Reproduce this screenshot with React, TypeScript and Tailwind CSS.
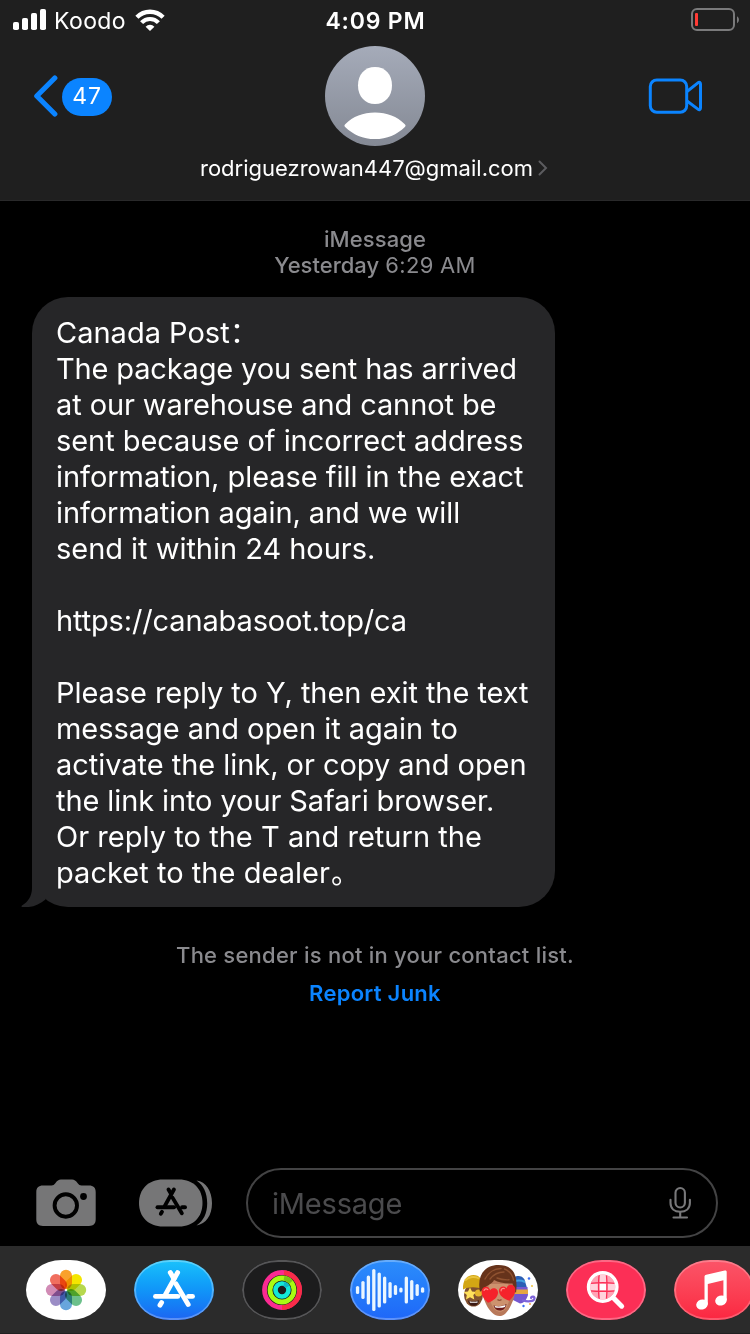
import type { ReactNode } from "react";

function SignalBars() {
  return (
    <svg width="34" height="22" viewBox="0 0 34 22" fill="#fff">
      <rect x="0" y="13" width="6" height="8" rx="1.8" />
      <rect x="9" y="9" width="6" height="12" rx="1.8" />
      <rect x="18" y="4" width="6" height="17" rx="1.8" />
      <rect x="27" y="0" width="6" height="21" rx="1.8" />
    </svg>
  );
}

function Wifi() {
  return (
    <svg width="30" height="22" viewBox="0 0 30 22" fill="none">
      <path d="M1.9 8.2a18.6 18.6 0 0 1 26.2 0" stroke="#fff" strokeWidth="4.4" />
      <path d="M6.600 13.600a11.600 11.600 0 0 1 16.800 0" stroke="#fff" strokeWidth="4.200" />
      <path d="M10.600 17.700a6.200 6.200 0 0 1 8.800 0L15 22z" fill="#fff" />
    </svg>
  );
}

function Battery() {
  return (
    <svg width="50" height="24" viewBox="0 0 50 24">
      <rect x="2" y="1" width="42" height="21" rx="5" fill="none" stroke="#7a7a7b" strokeWidth="2" />
      <rect x="5" y="5" width="3" height="13" rx="1" fill="#ff3b35" />
      <path d="M47 8.2c2.6 1.4 2.6 5.6 0 7z" fill="#7a7a7b" />
    </svg>
  );
}

function BackChevron() {
  return (
    <svg width="26" height="44" viewBox="0 0 26 44" fill="none">
      <path d="M22.800 4L4.800 22l18 18" stroke="#0b84ff" strokeWidth="5.200" strokeLinecap="round" strokeLinejoin="round" />
    </svg>
  );
}

function Avatar() {
  return (
    <svg width="100" height="100" viewBox="0 0 100 100">
      <defs>
        <linearGradient id="avatar" x1="0" y1="0" x2="0" y2="1">
          <stop offset="0" stopColor="#a5abb9" />
          <stop offset="1" stopColor="#848994" />
        </linearGradient>
      </defs>
      <circle cx="50" cy="50" r="50" fill="url(#avatar)" />
      <path d="M50 21c10.4 0 17 7.6 17 18.500S60 58 50 58 33 50.400 33 39.500 39.600 21 50 21z" fill="#fff" />
      <path d="M20.200 78.200C28 70.500 38 66.500 50 66.500s22 4 29.800 11.700c1 1 1 1.800.1 2.700C72 88.500 62 93 50 93s-22-4.500-29.900-12.100c-.9-.9-.9-1.700.1-2.700z" fill="#fff" />
    </svg>
  );
}

function VideoIcon() {
  return (
    <svg width="56" height="38" viewBox="0 0 56 38" fill="none" stroke="#0b84ff" strokeWidth="3" strokeLinejoin="round">
      <rect x="2.300" y="3" width="36.400" height="32.300" rx="6.500" />
      <path d="M38.700 14.700L49.900 5.900c1.400-1.100 2.600-.5 2.600 1.200v23.800c0 1.700-1.200 2.300-2.600 1.200L38.700 23.700" />
    </svg>
  );
}

function CameraIcon() {
  return (
    <svg width="60" height="48" viewBox="0 0 60 48">
      <path d="M7 6.500h8.500c1.800 0 2.600-.8 3.600-2C21.400 1.500 22.500.5 25 .5h11c2.500 0 3.600 1 5.900 4 1 1.200 1.800 2 3.600 2H53c4.500 0 6.700 2.200 6.700 6.700v27c0 4.500-2.200 6.700-6.700 6.700H7C2.500 46.900.3 44.700.3 40.200v-27C.3 8.700 2.500 6.500 7 6.500z" fill="#767677" />
      <circle cx="29.800" cy="26.500" r="11.200" fill="none" stroke="#000" strokeWidth="3.900" />
      <circle cx="47.500" cy="17.500" r="3.400" fill="#000" />
    </svg>
  );
}

function AppStoreGlyph({ color, weight }: { color: string; weight: number }) {
  return (
    <g stroke={color} strokeLinecap="round" fill="none" strokeWidth={weight}>
      <path d="M17.300 3.400l3.600 6.200" />
      <path d="M24.600 3.400L12.400 25.400" />
      <path d="M2.500 27.200h22.300" />
      <path d="M35.500 27.200h4" />
      <path d="M22.900 14.600l12.300 20.600" />
      <path d="M8.600 33.300l-1.600 2.600" />
    </g>
  );
}

function AppDrawerIcon() {
  return (
    <svg width="76" height="48" viewBox="0 0 76 48">
      <path d="M57.500 1.600C67 2.800 73 12.300 73 24.300S67 45.200 57.500 46.500C64.500 42 68.200 34.300 68.200 24.300S64.500 6.200 57.500 1.600z" fill="#767677" />
      <path d="M24 .5h16c14.500 0 23.500 9.500 23.500 23.500S54.500 47.500 40 47.500H24C9.500 47.500 0 38 0 24S9.500.5 24 .5z" fill="#767677" />
      <g transform="translate(16.600 8) scale(.745)">
        <AppStoreGlyph color="#000" weight={5.2} />
      </g>
    </svg>
  );
}

function MicIcon() {
  return (
    <svg width="24" height="34" viewBox="0 0 24 34" fill="none" stroke="#78787a" strokeWidth="2.100" strokeLinecap="round">
      <rect x="7.500" y="2" width="9.400" height="19.500" rx="4.700" />
      <path d="M2.500 13.800v3.300c0 5.500 4 8.700 9.700 8.700s9.700-3.200 9.700-8.700v-3.300" />
      <path d="M12.200 26v5M5.500 31.500h13.500" />
    </svg>
  );
}

const petals = [
  { angle: 0, color: "#f9a12c" },
  { angle: 45, color: "#f4e600" },
  { angle: 90, color: "#b6d84e" },
  { angle: 135, color: "#6cc08b" },
  { angle: 180, color: "#68a5dc" },
  { angle: 225, color: "#9b8dc6" },
  { angle: 270, color: "#d18bb5" },
  { angle: 315, color: "#f06e5e" },
];

function PhotosArt() {
  return (
    <g className="isolate">
      {petals.map((p) => (
        <rect key={p.angle} x="34" y="9.800" width="12" height="19.200" rx="6" fill={p.color} transform={`rotate(${p.angle} 40 30)`} className="mix-blend-multiply" />
      ))}
    </g>
  );
}

function ActivityArt() {
  return (
    <g fill="none">
      <circle cx="40" cy="30" r="17.500" stroke="#fb2a92" strokeWidth="4.800" />
      <path d="M42 12.600A17.500 17.500 0 0 1 40 47.500" stroke="#f92c48" strokeWidth="4.800" />
      <circle cx="40" cy="30" r="12" stroke="#a8fb12" strokeWidth="4.800" />
      <path d="M42 18.200a12 12 0 0 1 7 4" stroke="#77c617" strokeWidth="4.800" />
      <circle cx="40" cy="30" r="6.500" stroke="#13e8d8" strokeWidth="4.600" />
      <path d="M42 23.800a6.500 6.500 0 0 1 3.500 3" stroke="#10b8c8" strokeWidth="4.600" />
    </g>
  );
}

const wave = [8, 18, 29, 42, 35, 27, 16, 10, 5, 27, 20, 12, 5.5];

function AudioArt() {
  return (
    <g fill="#eaf6ff">
      {wave.map((h, i) => (
        <rect key={i} x={5.9 + i * 5.42} y={30 - h / 2} width="3.300" height={h} rx="1.600" />
      ))}
    </g>
  );
}

function Heart({ x, y, rotate }: { x: number; y: number; rotate: number }) {
  return (
    <g transform={`translate(${x} ${y}) rotate(${rotate})`}>
      <path d="M0 9C-5.500 5.500-8.500 2-8.200-2.500-7.800-7-2-8 0-3.800 2-8 7.800-7 8.200-2.500 8.500 2 5.500 5.500 0 9z" fill="#f5232b" />
      <path d="M-6-2.500c.3-1.800 2-2.600 3.600-1.500" stroke="#ff8d86" strokeWidth="1.200" fill="none" strokeLinecap="round" />
    </g>
  );
}

function MemojiArt() {
  return (
    <g>
      <ellipse cx="15.500" cy="35" rx="9.500" ry="11.500" fill="#80502f" />
      <path d="M5 29.500C4.500 20 9 15 15.500 15c6 0 9 4 9.500 14.500-6-3-14-3-20 0z" fill="#d3a614" />
      <path d="M7 20.500c4-4 10-4.500 14-2" stroke="#e8c33c" strokeWidth="2" fill="none" />
      <path d="M12 27.500l2 4 4.500.5-3.200 3 1 4.500-4.300-2.300-4 2.300.8-4.500-3.300-3 4.500-.5z" fill="#ffe05c" />
      <circle cx="20.500" cy="33" r="3.600" fill="#e6b52e" />
      <path d="M10 40.500c4 1.300 8 1.300 11-.2-.6 4-2.500 5.500-5.500 5.500s-5-1.800-5.500-5.300z" fill="#3b1a14" />
      <path d="M11.500 41.300c3 .7 6 .7 8 0v1.500h-7.500z" fill="#fff" />
      <path d="M55 18c4-3 9-2.500 11.500 1.500L69 28H55z" fill="#2b5fb4" />
      <path d="M56 21.500c4-1.500 7-1.300 11 .5" stroke="#43a3df" strokeWidth="2" fill="none" />
      <path d="M55 27h14.500l.5 8c-1.500 5-4 8-8 8.500L55 40z" fill="#7558cf" />
      <path d="M56 29.500h14v4.500H56z" fill="#e5a641" />
      <path d="M65 40.500c5 1.500 11 1 11.500-2 .2-2.200-3-2.500-3.500-.6" stroke="#7d63da" strokeWidth="2.200" fill="none" strokeLinecap="round" />
      <circle cx="71" cy="18.500" r="1.300" fill="#3c6ff0" />
      <circle cx="74" cy="26" r="1.100" fill="#f2c84b" />
      <circle cx="65.500" cy="46" r="1.200" fill="#3c6ff0" />
      <circle cx="72" cy="44" r="1" fill="#f2a24b" />
      <path d="M24.500 27c0-12 6-18 16.500-18s16 6 16 18c0 6-.5 11-3.500 17-3 7-7 12-12 12S31.500 51.500 28 44c-3-6-3.500-11-3.500-17z" fill="#b9795a" />
      <path d="M31 24h19c4 6 2 18-2 24-3 5-9 5-12.500 0C31 41 29 31 31 24z" fill="#cd926e" />
      <path d="M22 32C18.500 15 27 5 40.500 5 54 5 60.500 13 58 33c-2.500-3-2.500-6-3.500-9.500-8 .3-14-1-18.500-3.500C34.500 24 27 26 22 32z" fill="#66331b" />
      <path d="M27 19c3-6 9-10.500 16-10.500M32 19c3.500-4.500 8-7 14-7M46.500 9c5 2 8 6 9 11M39 18c4 1.600 8 2 12 1.800" stroke="#8f5230" strokeWidth="1.400" fill="none" strokeLinecap="round" />
      <path d="M39.500 39.500c1 1 3 1 4 0" stroke="#8f5237" strokeWidth="1.300" fill="none" />
      <path d="M35.500 45.500c4.500 1.200 9 .8 13-1.500-.7 4.500-3.500 6.500-6.500 6.500-3.200 0-5.800-2-6.500-5z" fill="#6a1a1a" />
      <path d="M36.500 46c4 .8 7.500.5 11-1l-.5 1.900c-3 1-6.800 1.100-9.600.5z" fill="#fff" />
      <Heart x={31.5} y={34} rotate={10} />
      <Heart x={49.500} y={32} rotate={-12} />
    </g>
  );
}

function SearchArt() {
  return (
    <g>
      <defs>
        <clipPath id="lens">
          <circle cx="36.700" cy="27" r="12.500" />
        </clipPath>
      </defs>
      <path d="M48 38.500l7.700 7.700" stroke="#fff" strokeWidth="5" strokeLinecap="round" />
      <g clipPath="url(#lens)">
        <path d="M24 14h26v26H24z" fill="#ffa3b5" />
        <path d="M33.800 24h6.200v6h-6.200z" fill="#fff" />
        <path d="M33.800 14h6.200v8.500h-6.200zM33.800 32h6.200v8h-6.200zM24 24h8.300v6H24zM41.500 24H50v6h-8.500z" fill="#ffd3dc" />
        <path d="M24 23.300q12.700-1.200 25.400 0M24 30.800q12.700 1.200 25.400 0M33.100 14.500q-1.200 12.500 0 25M40.400 14.500q1.200 12.500 0 25" stroke="#fc2f56" strokeWidth="1.300" fill="none" />
      </g>
      <circle cx="36.700" cy="27" r="14.200" fill="none" stroke="#fff" strokeWidth="3.400" />
    </g>
  );
}

function MusicArt() {
  return (
    <g fill="#fff">
      <path d="M30.500 16.800c0-1.200.6-1.800 1.700-2l18.500-4.300c1.300-.3 2 .2 2 1.400v28.200h-3.300V20.300L33.800 24v20.500h-3.300z" />
      <ellipse cx="28" cy="44.500" rx="5.900" ry="5" transform="rotate(-18 28 44.500)" />
      <ellipse cx="47" cy="40.500" rx="5.900" ry="5" transform="rotate(-18 47 40.500)" />
    </g>
  );
}

function AppPill({ className, children }: { className: string; children: ReactNode }) {
  return (
    <div className={`h-[60px] w-20 shrink-0 overflow-hidden rounded-[36px/30px] ${className}`}>
      <svg width="80" height="60" viewBox="0 0 80 60">{children}</svg>
    </div>
  );
}

function Outline({ color }: { color: string }) {
  return <path d="M36 1h8c20.500 0 35 12.200 35 29S64.500 59 44 59h-8C15.500 59 1 46.800 1 30S15.500 1 36 1z" fill="none" stroke={color} strokeWidth="2" />;
}

function Header() {
  return (
    <header className="flex h-[201px] shrink-0 flex-col border-b border-[#29292a] bg-[#1f1f1f]">
      <div className="grid h-10 grid-cols-3 items-center pl-[13px] pr-[10px]">
        <div className="flex items-center">
          <SignalBars />
          <span className="ml-[7px] pt-[2px] text-[23px] leading-none tracking-[0.4px]">Koodo</span>
          <span className="ml-[9px]"><Wifi /></span>
        </div>
        <div className="pr-[2px] pt-[2px] text-center text-[23px] font-semibold leading-none tracking-[0.8px]">4:09 PM</div>
        <div className="flex justify-end"><Battery /></div>
      </div>
      <div className="mt-[6px] grid h-[100px] grid-cols-3 items-center pl-[32px] pr-[46px]">
        <div className="flex items-center">
          <BackChevron />
          <span className="ml-1 mt-px flex h-[38px] w-[50px] items-center justify-center rounded-full bg-[#0b84ff] text-[23px] tracking-[0.8px]">47</span>
        </div>
        <div className="flex justify-center pl-[14px]"><Avatar /></div>
        <div className="flex justify-end"><VideoIcon /></div>
      </div>
      <div className="flex h-[44px] items-center justify-center pr-[2px]">
        <span className="text-[22px] leading-none">rodriguezrowan447@gmail.com</span>
        <svg className="ml-[5px]" width="10" height="16" viewBox="0 0 10 16" fill="none">
          <path d="M1.500 1.500L8 8l-6.500 6.500" stroke="#5c5c5f" strokeWidth="2" strokeLinecap="round" />
        </svg>
      </div>
    </header>
  );
}

function Message() {
  return (
    <div className="relative ml-8 mt-[19px] h-[610px] w-[523px] rounded-[36px] bg-[#262628] pl-6 pt-[18px] text-[29px] leading-9">
      <svg className="absolute -left-[11px] bottom-0" width="60" height="40" viewBox="0 0 60 40">
        <path d="M11 0v21c0 8-4 14-10 17.500-1 .7-.7 1.200.5 1.400C10.500 41 18 38 24.500 32.500V0z" fill="#262628" />
      </svg>
      <div className="relative whitespace-pre">
        <p>Canada Post：</p>
        <p className="tracking-[-0.15px]">The package you sent has arrived</p>
        <p className="tracking-[-0.1px]">at our warehouse and cannot be</p>
        <p className="tracking-[-0.06px]">sent because of incorrect address</p>
        <p className="tracking-[-0.044px]">information, please fill in the exact</p>
        <p className="tracking-[-0.1px]">information again, and we will</p>
        <p className="tracking-[-0.029px]">send it within 24 hours.</p>
        <p className="mt-9 tracking-[-0.14px]">https://canabasoot.top/ca</p>
        <p className="mt-9 tracking-[-0.06px]">Please reply to Y, then exit the text</p>
        <p className="tracking-[-0.03px]">message and open it again to</p>
        <p className="tracking-[-0.04px]">activate the link, or copy and open</p>
        <p className="tracking-[-0.1px]">the link into your Safari browser.</p>
        <p className="tracking-[0.036px]">Or reply to the T and return the</p>
        <p className="tracking-[0.036px]">packet to the dealer<span className="relative left-px top-px">。</span></p>
      </div>
    </div>
  );
}

function Composer() {
  return (
    <div className="flex h-[70px] items-center pl-9 pr-8">
      <CameraIcon />
      <div className="ml-[43px]"><AppDrawerIcon /></div>
      <div className="ml-[31px] flex h-[70px] flex-1 items-center justify-between rounded-full border-2 border-[#434344] pl-6 pr-6">
        <span className="pt-[2px] text-[29px] tracking-[-0.2px] text-[#4b4b4d]">iMessage</span>
        <MicIcon />
      </div>
    </div>
  );
}

function AppTray() {
  return (
    <div className="mt-2 flex h-[88px] shrink-0 gap-7 overflow-hidden border-b border-[#202020] bg-[#2b2b2b] pl-[26px] pt-[14px]">
      <AppPill className="bg-white"><PhotosArt /></AppPill>
      <AppPill className="bg-linear-to-b from-[#1cc2fb] to-[#1d64f2]">
        <Outline color="rgba(255,255,255,.28)" />
        <g transform="translate(19 9.200)"><AppStoreGlyph color="#fff" weight={4.9} /></g>
      </AppPill>
      <AppPill className="bg-[#1c1c1d]"><Outline color="#555557" /><ActivityArt /></AppPill>
      <AppPill className="bg-linear-to-b from-[#2c8dfb] to-[#1f67f8]"><Outline color="rgba(255,255,255,.28)" /><AudioArt /></AppPill>
      <AppPill className="bg-white"><MemojiArt /></AppPill>
      <AppPill className="bg-[#fc2f56]"><Outline color="rgba(255,255,255,.28)" /><SearchArt /></AppPill>
      <AppPill className="bg-linear-to-b from-[#fb5468] to-[#fb2540]"><Outline color="rgba(255,255,255,.24)" /><MusicArt /></AppPill>
    </div>
  );
}

export default function App() {
  return (
    <div className="flex h-[1334px] w-[750px] flex-col overflow-hidden bg-black font-['Inter','Noto_Sans_CJK_SC',sans-serif] text-white">
      <Header />
      <main className="flex min-h-0 flex-1 flex-col">
        <div className="mt-[25px] text-center text-[22px] leading-[26px] text-[#8a8a8e]">
          <p className="font-medium tracking-[0.09px]">iMessage</p>
          <p><span className="font-medium">Yesterday</span> <span className="tracking-[0.3px]">6:29 AM</span></p>
        </div>
        <Message />
        <div className="mt-[35px] text-center text-[22px] leading-[26px]">
          <p className="font-medium tracking-[0.238px] text-[#8a8a8e]">The sender is not in your contact list.</p>
          <p className="mt-3 font-semibold tracking-[0.267px] text-[#0b84ff]">Report Junk</p>
        </div>
      </main>
      <Composer />
      <AppTray />
    </div>
  );
}
